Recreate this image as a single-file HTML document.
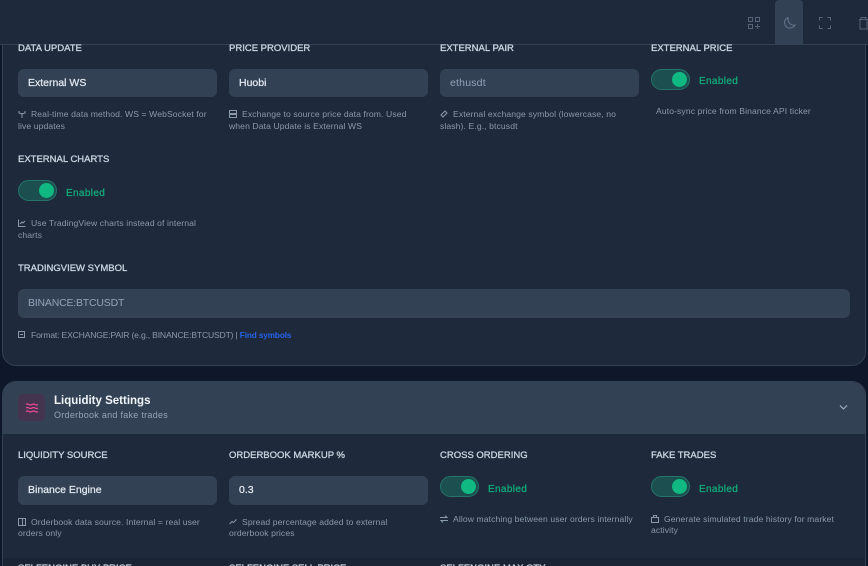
<!DOCTYPE html>
<html style="width:868px;height:566px;overflow:hidden"><head><meta charset="utf-8"><style>
*{box-sizing:border-box}
html,body{margin:0;padding:0}
body{width:868px;height:566px;overflow:hidden;position:relative;background:#0f172a;font-family:"Liberation Sans",sans-serif}
.a{position:absolute}
.card{position:absolute;left:2px;width:864px;background:#1e293b;border:1px solid #334155}
.l{position:absolute;font-size:9.5px;font-weight:400;-webkit-text-stroke:.3px #cbd5e1;color:#cbd5e1;letter-spacing:0;line-height:12px;white-space:nowrap}
.i{position:absolute;height:28px;width:199px;background:#334155;border-radius:6px;font-size:10.5px;line-height:28px;padding-left:10px;color:#e2e8f0;font-weight:400;-webkit-text-stroke:.25px #e2e8f0;white-space:nowrap}
.i.p{color:#94a3b8;font-weight:400;letter-spacing:.2px;-webkit-text-stroke:0}
.h{position:absolute;font-size:8.6px;line-height:11.5px;color:#8b99ad;letter-spacing:.1px;width:200px}
.h svg{display:inline-block;vertical-align:-1px;margin-right:5px}
.t{position:absolute;width:39px;height:21px;border-radius:11px;background:#1c5050;border:1px solid #24746a}
.t:after{content:"";position:absolute;left:20px;top:2px;width:15px;height:15px;border-radius:50%;background:#10b981}
.e{position:absolute;font-size:10px;font-weight:400;-webkit-text-stroke:.25px #10b981;color:#10b981;letter-spacing:.35px;line-height:12px;opacity:.92;margin-top:1px}
svg{fill:none;stroke:#8b99ad;stroke-width:1}
</style></head><body>

<div class="card" style="top:-20px;height:386px;border-radius:0 0 14px 14px"></div>

<div class="a" style="left:0;top:0;width:868px;height:45px;background:#1e293b;border-bottom:1px solid #334155"></div>
<div class="a" style="left:775px;top:0;width:28px;height:44px;background:#334155;border-radius:4px 4px 0 0"></div>
<svg class="a" style="left:747px;top:16px;stroke:#566479" width="14" height="14" viewBox="0 0 14 14"><rect x="1.500" y="1.500" width="4" height="4"/><rect x="8.500" y="1.500" width="4" height="4"/><rect x="1.500" y="8.500" width="4" height="4"/><path d="M8 10.500h5M10.500 8v5"/></svg>
<svg class="a" style="left:782px;top:16px;stroke:#64748b" width="14" height="14" viewBox="0 0 14 14"><path d="M6 1.500a5.500 5.500 0 1 0 7 7.500c-3.500 1-7.500-2-7-7.500z"/></svg>
<svg class="a" style="left:818px;top:16px;stroke:#566479" width="14" height="14" viewBox="0 0 14 14"><path d="M1.500 4.500v-3h3M9.500 1.500h3v3M12.500 9.500v3h-3M4.500 12.500h-3v-3"/></svg>
<svg class="a" style="left:858px;top:16px;stroke:#566479" width="10" height="14" viewBox="0 0 10 14"><path d="M1 3.500h9M3 3.500v-2h5v2M2 3.500v9.500h7v-9.500"/></svg>

<div class="l" style="left:18px;top:43px">DATA UPDATE</div>
<div class="l" style="left:229px;top:43px">PRICE PROVIDER</div>
<div class="l" style="left:440px;top:43px">EXTERNAL PAIR</div>
<div class="l" style="left:651px;top:43px">EXTERNAL PRICE</div>

<div class="i" style="left:18px;top:69px">External WS</div>
<div class="i" style="left:229px;top:69px">Huobi</div>
<div class="i p" style="left:440px;top:69px">ethusdt</div>
<div class="t" style="left:651px;top:69px"></div>
<div class="e" style="left:699px;top:75px">Enabled</div>

<div class="h" style="left:18px;top:109px"><svg width="8" height="8" viewBox="0 0 8 8"><path d="M4 3v5M1 1v2l3 1 3-1V1"/></svg>Real-time data method. WS = WebSocket for live updates</div>
<div class="h" style="left:229px;top:109px"><svg width="8" height="8" viewBox="0 0 8 8"><rect x=".5" y=".5" width="7" height="3"/><rect x=".5" y="4.500" width="7" height="3"/></svg>Exchange to source price data from. Used when Data Update is External WS</div>
<div class="h" style="left:440px;top:109px"><svg width="8" height="8" viewBox="0 0 8 8"><path d="M1 5l4-4 2 2-4 4z"/></svg>External exchange symbol (lowercase, no slash). E.g., btcusdt</div>
<div class="h" style="left:656px;top:106px;width:205px">Auto-sync price from Binance API ticker</div>

<div class="l" style="left:18px;top:154px">EXTERNAL CHARTS</div>
<div class="t" style="left:18px;top:180px"></div>
<div class="e" style="left:66px;top:187px">Enabled</div>
<div class="h" style="left:18px;top:218px"><svg width="8" height="8" viewBox="0 0 8 8"><path d="M.5 .5v7h7M2 5l2-2 1 1 2-2"/></svg>Use TradingView charts instead of internal charts</div>

<div class="l" style="left:18px;top:263px">TRADINGVIEW SYMBOL</div>
<div class="i p" style="left:18px;top:289px;width:832px;height:29px;line-height:29px;letter-spacing:-.2px">BINANCE:BTCUSDT</div>
<div class="h" style="left:18px;top:329.500px;width:400px;white-space:nowrap;letter-spacing:-.18px"><svg width="8" height="8" viewBox="0 0 8 8"><rect x=".5" y=".5" width="6" height="6"/><path d="M2 3.500h3"/></svg>Format: EXCHANGE:PAIR (e.g., BINANCE:BTCUSDT) | <span style="color:#2563eb;font-weight:700;font-size:8.2px;letter-spacing:-.1px">Find symbols</span></div>

<div class="card" style="top:381px;height:185px;border-radius:14px 14px 0 0;border-bottom:0"></div>
<div class="a" style="left:3px;top:382px;width:862px;height:52px;background:#334155;border-radius:13px 13px 0 0"></div>
<div class="a" style="left:18px;top:394px;width:27px;height:27px;border-radius:5px;background:#433450"></div>
<svg class="a" style="left:26px;top:403px;stroke:#ec4899;stroke-width:1.200" width="12" height="10" viewBox="0 0 12 10"><path d="M0 1.500q1.500-1 3 0t3 0 3 0 3 0M0 5q1.500-1 3 0t3 0 3 0 3 0M0 8.500q1.500-1 3 0t3 0 3 0 3 0"/></svg>
<div class="a" style="left:54px;top:393.500px;font-size:11.500px;font-weight:700;color:#f1f5f9;line-height:14px;white-space:nowrap">Liquidity Settings</div>
<div class="a" style="left:54px;top:409px;font-size:9px;color:#94a3b8;letter-spacing:.28px;line-height:12px;white-space:nowrap">Orderbook and fake trades</div>
<svg class="a" style="left:839px;top:404px;stroke:#94a3b8;stroke-width:1.300" width="9" height="7" viewBox="0 0 9 7"><path d="M1 1.500l3.500 3.500 3.500-3.500"/></svg>

<div class="l" style="left:18px;top:450px">LIQUIDITY SOURCE</div>
<div class="l" style="left:229px;top:450px">ORDERBOOK MARKUP %</div>
<div class="l" style="left:440px;top:450px">CROSS ORDERING</div>
<div class="l" style="left:651px;top:450px">FAKE TRADES</div>

<div class="i" style="left:18px;top:476px;height:29px;line-height:29px">Binance Engine</div>
<div class="i" style="left:229px;top:476px;height:29px;line-height:29px">0.3</div>
<div class="t" style="left:440px;top:476px"></div>
<div class="e" style="left:488px;top:483px">Enabled</div>
<div class="t" style="left:651px;top:476px"></div>
<div class="e" style="left:699px;top:483px">Enabled</div>

<div class="h" style="left:18px;top:517px;line-height:11px"><svg width="8" height="8" viewBox="0 0 8 8"><rect x=".5" y=".5" width="7" height="7"/><path d="M4.500 .5v7"/></svg>Orderbook data source. Internal = real user orders only</div>
<div class="h" style="left:229px;top:517px;line-height:11px"><svg width="8" height="8" viewBox="0 0 8 8"><path d="M.5 6l2.500-2.500 1.500 1 3-3"/></svg>Spread percentage added to external orderbook prices</div>
<div class="h" style="left:440px;top:514px;width:205px;white-space:nowrap;line-height:11px"><svg width="8" height="8" viewBox="0 0 8 8"><path d="M0 2.500h7l-2-2M8 5.500h-7l2 2"/></svg>Allow matching between user orders internally</div>
<div class="h" style="left:651px;top:514px;width:200px;line-height:11px"><svg width="8" height="8" viewBox="0 0 8 8"><rect x=".5" y="2.500" width="7" height="5"/><path d="M2.500 2.500v-2h3v2"/></svg>Generate simulated trade history for market activity</div>

<div class="a" style="left:3px;top:558px;width:862px;height:8px;background:#1a2435;overflow:hidden">
<div class="l" style="left:15px;top:5px">SELFENGINE BUY PRICE</div>
<div class="l" style="left:226px;top:5px">SELFENGINE SELL PRICE</div>
<div class="l" style="left:437px;top:5px">SELFENGINE MAX QTY</div>
</div>
</body></html>
